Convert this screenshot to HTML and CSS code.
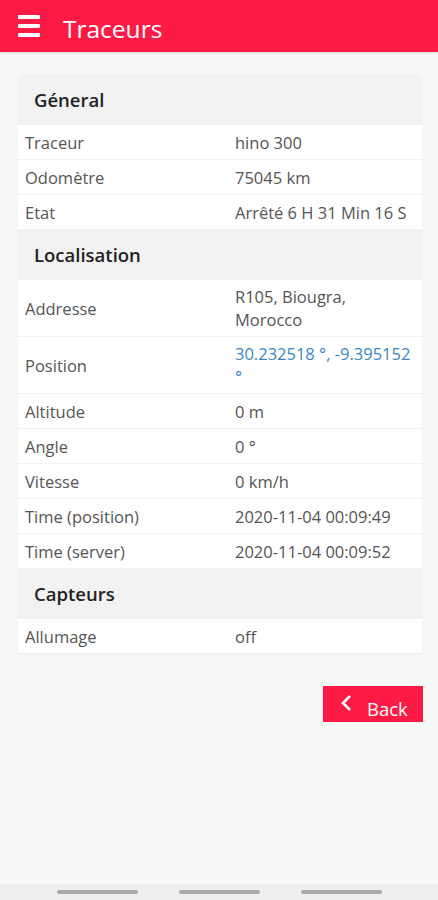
FILE: index.html
```html
<!DOCTYPE html>
<html lang="fr">
<head>
<meta charset="utf-8">
<title>Traceurs</title>
<link rel="stylesheet" href="styles.css">
</head>
<body>
<header class="topbar">
  <svg class="menu-icon" width="22" height="22" viewBox="0 0 22 22"><rect x="0" y="0" width="22" height="4" rx="1" fill="#fff"/><rect x="0" y="9" width="22" height="4" rx="1" fill="#fff"/><rect x="0" y="18" width="22" height="4" rx="1" fill="#fff"/></svg>
  <h1 class="title">Traceurs</h1>
</header>
<main class="content">
  <section class="card">
    <h2 class="section-title">Géneral</h2>
    <div class="row"><span class="label">Traceur</span><span class="value">hino 300</span></div>
    <div class="row"><span class="label">Odomètre</span><span class="value">75045 km</span></div>
    <div class="row"><span class="label">Etat</span><span class="value">Arrêté 6 H 31 Min 16 S</span></div>
    <h2 class="section-title">Localisation</h2>
    <div class="row tall"><span class="label">Addresse</span><span class="value">R105, Biougra, Morocco</span></div>
    <div class="row tall"><span class="label">Position</span><span class="value link">30.232518 °, -9.395152 °</span></div>
    <div class="row"><span class="label">Altitude</span><span class="value">0 m</span></div>
    <div class="row"><span class="label">Angle</span><span class="value">0 °</span></div>
    <div class="row"><span class="label">Vitesse</span><span class="value">0 km/h</span></div>
    <div class="row"><span class="label">Time (position)</span><span class="value">2020-11-04 00:09:49</span></div>
    <div class="row"><span class="label">Time (server)</span><span class="value">2020-11-04 00:09:52</span></div>
    <h2 class="section-title">Capteurs</h2>
    <div class="row"><span class="label">Allumage</span><span class="value">off</span></div>
  </section>
  <div class="actions">
    <button class="back-btn"><svg width="12" height="18" viewBox="0 0 12 18"><path d="M10 2 L3 9 L10 16" fill="none" stroke="#fff" stroke-width="2.6"/></svg><span>Back</span></button>
  </div>
</main>
<footer class="navbar">
  <span class="nav-line"></span><span class="nav-line"></span><span class="nav-line"></span>
</footer>
</body>
</html>
```
FILE: styles.css
```css
* { box-sizing: border-box; }
html, body { margin: 0; padding: 0; }
body {
  width: 438px;
  height: 900px;
  background: #f7f7f7;
  font-family: "Open Sans", "Noto Sans", sans-serif;
  color: #444;
  display: flex;
  flex-direction: column;
  overflow: hidden;
}
.topbar {
  height: 52px;
  background: #fd1a45;
  display: flex;
  align-items: center;
  padding-left: 18px;
  flex-shrink: 0;
  box-shadow: 0 1px 2px rgba(0,0,0,0.12);
}
.menu-icon { display: block; margin-top: -1px; }
.title {
  margin: 6px 0 0 23px;
  color: #fff;
  font-size: 24.5px;
  font-weight: 400;
  line-height: 1;
}
.content {
  flex: 1;
  padding: 23px 16px 0 18px;
}
.card {
  background: #f2f2f2;
  box-shadow: 0 0 2px rgba(0,0,0,0.06);
  width: 404px;
}
.section-title {
  margin: 0;
  height: 50px;
  display: flex;
  align-items: center;
  padding-left: 16px;
  padding-bottom: 1px;
  font-size: 18.5px;
  font-weight: 600;
  color: #222;
}
.row {
  display: grid;
  grid-template-columns: 210px 1fr;
  align-items: center;
  min-height: 35px;
  background: #fff;
  border-bottom: 1px solid #f2f2f2;
  font-size: 16.5px;
  padding: 0 6px 0 7px;
  line-height: 23px;
}
.row.tall { min-height: 57px; }
.label { color: #555; }
.value { color: #555; }
.value.link { color: #3b86c6; }
.actions {
  display: flex;
  justify-content: flex-end;
  margin-top: 32px;
  width: 405px;
}
.back-btn {
  width: 100px;
  height: 36px;
  background: #fd1a45;
  border: none;
  color: #fff;
  font-family: "Open Sans", "Noto Sans", sans-serif;
  font-size: 18.5px;
  display: flex;
  align-items: center;
  padding: 0 0 0 17px;
  gap: 15px;
}
.back-btn svg { margin-top: -2px; }
.back-btn span { margin-top: 8px; }
.navbar {
  height: 16px;
  background: #eeeeee;
  display: flex;
  justify-content: center;
  gap: 41px;
  align-items: flex-start;
  padding-top: 6px;
  flex-shrink: 0;
}
.nav-line {
  width: 81px;
  height: 4px;
  border-radius: 2px;
  background: #aaa;
}
```
